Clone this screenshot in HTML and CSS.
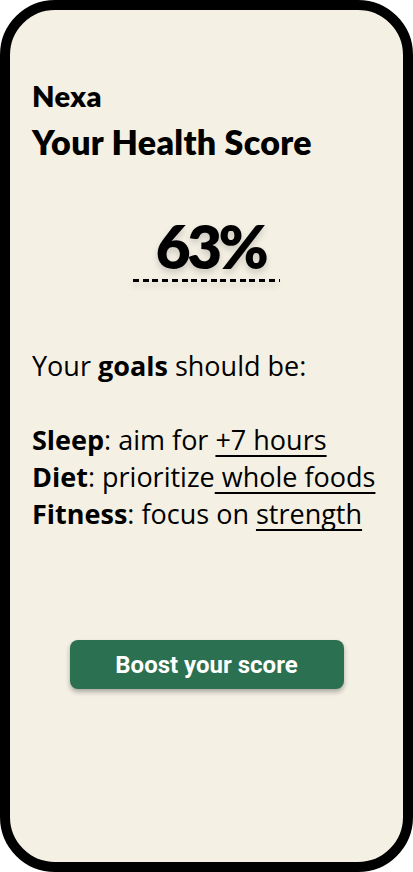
FILE: index.html
```html
<!DOCTYPE html>
<html lang="en">
<head>
<meta charset="utf-8">
<title>Nexa – Your Health Score</title>
<link rel="stylesheet" href="styles.css">
</head>
<body>
<main class="phone">
  <header class="head">
    <h1 class="brand">Nexa</h1>
    <h2 class="title">Your Health Score</h2>
  </header>
  <div class="score-wrap">
    <div class="score">63%</div>
  </div>
  <p class="goals">
    Your <b>goals</b> should be:<br><br>
    <b>Sleep</b>: aim for <u>+7 hours</u><br>
    <b>Diet</b>: prioritize<u> whole foods</u><br>
    <b>Fitness</b>: focus on <u>strength</u>
  </p>
  <div class="cta-wrap">
    <button class="cta">Boost your score</button>
  </div>
</main>
</body>
</html>
```
FILE: styles.css
```css
* { box-sizing: border-box; }
html, body { margin: 0; padding: 0; background: #ffffff; }
body { font-family: "Lato", "Noto Sans", sans-serif; color: #000; }

.phone {
  width: 413px;
  height: 872px;
  border: 10px solid #000;
  border-radius: 55px;
  background: #f4f0e4;
  padding: 69px 22px 0 22px;
  display: flex;
  flex-direction: column;
}

.head { display: flex; flex-direction: column; }
.brand {
  margin: 0;
  font-size: 29px;
  line-height: 34px;
  font-weight: 800;
  letter-spacing: 0.4px;
}
.title {
  margin: 8px 0 0 0;
  font-size: 34px;
  line-height: 42px;
  font-weight: 800;
  letter-spacing: 0.3px;
}

.score-wrap {
  display: flex;
  justify-content: center;
  margin-top: 53px;
}
.score {
  font-size: 60px;
  line-height: 60px;
  font-weight: 800;
  letter-spacing: -3.5px;
  padding: 0 15px 6px 23px;
  background-image: repeating-linear-gradient(90deg, #000 0 6px, transparent 6px 9.7px);
  background-size: 100% 3px;
  background-position: left bottom;
  background-repeat: no-repeat;
  filter: drop-shadow(0 4px 3px rgba(0,0,0,0.16));
}

.goals {
  margin: 65px 0 0 0;
  font-family: "Open Sans", "Lato", sans-serif;
  font-size: 27px;
  line-height: 37px;
  letter-spacing: 0;
}
.goals b { font-weight: 700; }
.goals u {
  text-decoration-thickness: 2px;
  text-underline-offset: 5px;
  text-decoration-skip-ink: none;
}

.cta-wrap {
  display: flex;
  justify-content: center;
  margin-top: 108px;
}
.cta {
  width: 274px;
  height: 49px;
  border: none;
  border-radius: 8px;
  background: #2b7050;
  color: #fff;
  font-family: "Roboto", sans-serif;
  font-weight: 700;
  font-size: 24px;
  box-shadow: 0 3px 5px rgba(0,0,0,0.3);
}
```
